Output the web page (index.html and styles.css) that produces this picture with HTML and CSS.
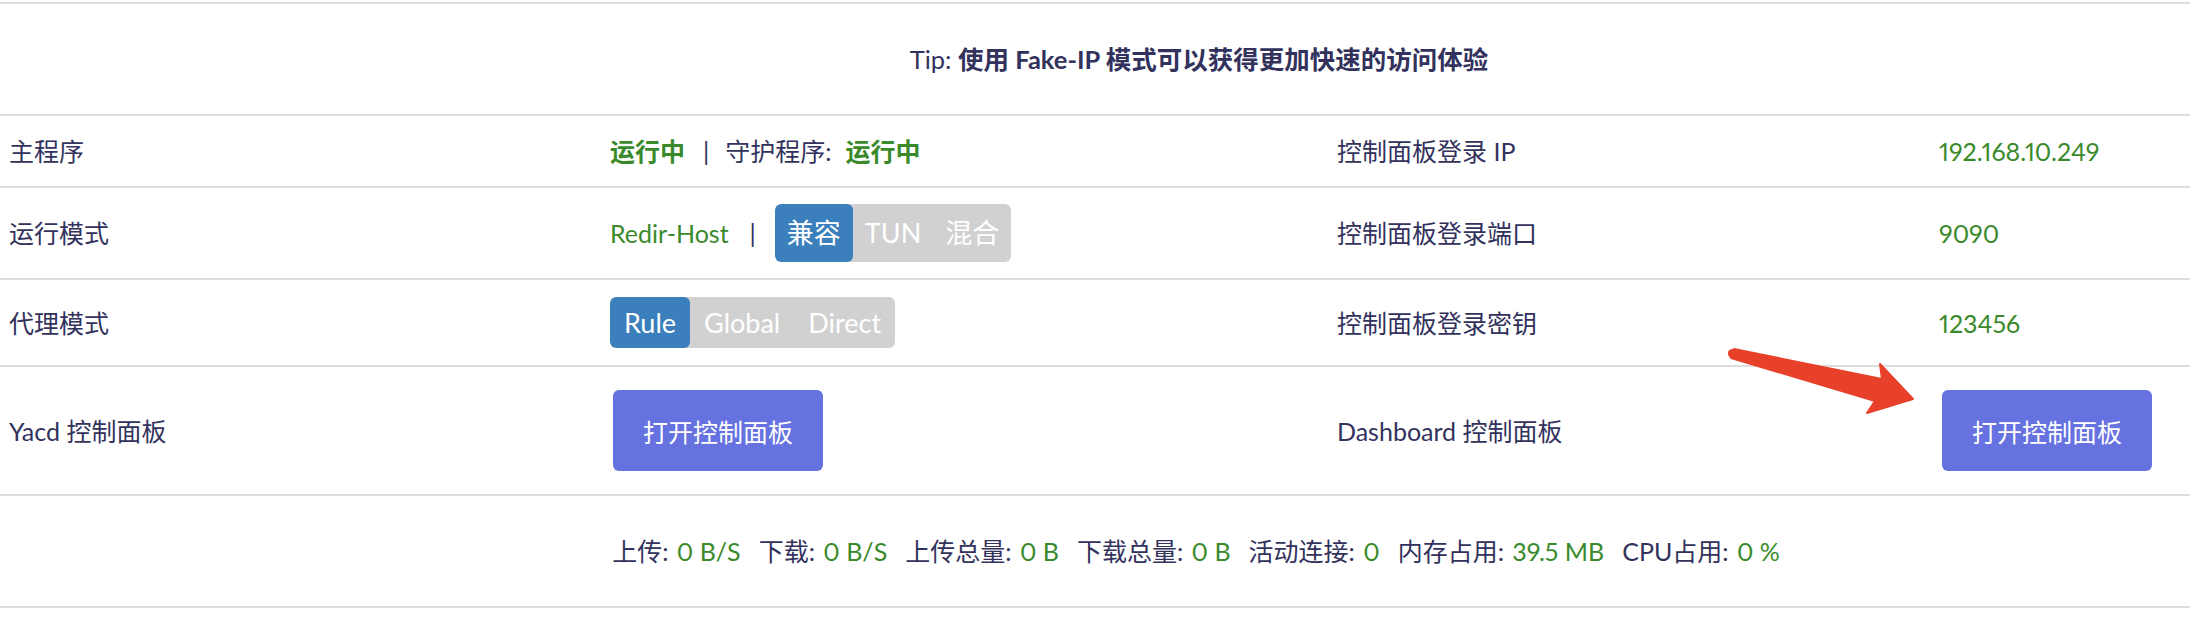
FILE: index.html
```html
<!DOCTYPE html>
<html lang="zh-CN">
<head>
<meta charset="utf-8">
<title>OpenClash</title>
<link rel="stylesheet" href="styles.css">
</head>
<body>
<div class="page">
  <div class="table">
    <div class="row row-wide">
      <div class="wide-cell tip">Tip: <b>使用 Fake-IP 模式可以获得更加快速的访问体验</b></div>
    </div>
    <div class="row">
      <div class="cell">主程序</div>
      <div class="cell"><span class="ok">运行中</span><span class="sep">|</span>守护程序:<span class="ok ok-gap">运行中</span></div>
      <div class="cell">控制面板登录 IP</div>
      <div class="cell val">192.168.10.249</div>
    </div>
    <div class="row">
      <div class="cell">运行模式</div>
      <div class="cell">
        <span class="val">Redir-Host</span><span class="sep sep-wide">|</span>
        <span class="seg seg-cjk"><span class="seg-item active">兼容</span><span class="seg-item">TUN</span><span class="seg-item">混合</span></span>
      </div>
      <div class="cell">控制面板登录端口</div>
      <div class="cell val">9090</div>
    </div>
    <div class="row">
      <div class="cell">代理模式</div>
      <div class="cell">
        <span class="seg seg-latin"><span class="seg-item active">Rule</span><span class="seg-item">Global</span><span class="seg-item">Direct</span></span>
      </div>
      <div class="cell">控制面板登录密钥</div>
      <div class="cell val">123456</div>
    </div>
    <div class="row">
      <div class="cell">Yacd 控制面板</div>
      <div class="cell"><button class="btn">打开控制面板</button></div>
      <div class="cell">Dashboard 控制面板</div>
      <div class="cell"><button class="btn">打开控制面板</button></div>
    </div>
    <div class="row row-wide">
      <div class="wide-cell stats">
        上传: <span class="val">0 B/S</span><span class="gap"></span>下载: <span class="val">0 B/S</span><span class="gap"></span>上传总量: <span class="val">0 B</span><span class="gap"></span>下载总量: <span class="val">0 B</span><span class="gap"></span>活动连接: <span class="val">0</span><span class="gap"></span>内存占用: <span class="val">39.5 MB</span><span class="gap"></span>CPU占用: <span class="val">0 %</span>
      </div>
    </div>
  </div>
  <svg class="arrow" width="2190" height="624" viewBox="0 0 2190 624" aria-hidden="true">
    <polygon points="1734,349 1882,379 1880,364 1913,399 1867,413 1875,401 1731,358" fill="#e8412a" stroke="#e8412a" stroke-width="2" stroke-linejoin="round"/>
    <circle cx="1732.5" cy="353.5" r="4.6" fill="#e8412a"/>
  </svg>
</div>
</body>
</html>
```

FILE: styles.css
```css
html, body {
  margin: 0;
  padding: 0;
  background: #ffffff;
}

body {
  font-family: Lato, "Noto Sans CJK SC", sans-serif;
  font-size: 25px;
  color: #32325d;
}

.page {
  position: relative;
  width: 2190px;
  height: 624px;
  overflow: hidden;
}

.table {
  margin-top: 2px;
  border-top: 2px solid #dddddd;
}

.row {
  display: grid;
  grid-template-columns: 601px 727px 602px 1fr;
  border-bottom: 2px solid #dddddd;
}

.row-wide {
  display: block;
}

.cell {
  display: flex;
  align-items: center;
  padding: 16px 9px;
  min-height: 38px;
  line-height: 38px;
  white-space: nowrap;
}

.wide-cell {
  padding: 37px 0 37px 202px;
  line-height: 36px;
  text-align: center;
  white-space: nowrap;
}

.tip {
  font-size: 25.5px;
  padding-left: 208px;
}

.tip b {
  font-weight: 700;
}

.val {
  color: #3a8a2c;
  font-variant-numeric: proportional-nums;
}

.stats .val {
  margin-left: 2px;
}

.ok {
  color: #3a8a2c;
  font-weight: 700;
}

.ok-gap {
  margin-left: 14px;
}

.sep {
  margin: 0 16px 0 18px;
}

.sep-wide {
  margin: 0 19px 0 21px;
}

.gap {
  display: inline-block;
  width: 18px;
}

.seg {
  display: inline-flex;
  background: #d1d1d1;
  border-radius: 6px;
  overflow: hidden;
  font-size: 27px;
}

.seg-cjk {
  height: 58px;
}

.seg-latin {
  height: 51px;
  margin: 1px 0;
}

.seg-item {
  display: flex;
  align-items: center;
  padding: 0 14px;
  color: #ffffff;
}

.seg-cjk .seg-item {
  padding: 0 12px;
}

.seg-item.active {
  background: #3b7fbd;
  border-radius: 6px;
}

.btn {
  margin: 7px 0 7px 3px;
  height: 81px;
  padding: 0 30px;
  border: none;
  border-radius: 6px;
  background: #6672e0;
  color: #ffffff;
  font-family: Lato, "Noto Sans CJK SC", sans-serif;
  font-size: 25px;
  cursor: pointer;
}

.arrow {
  position: absolute;
  top: 0;
  left: 0;
  pointer-events: none;
}
```
